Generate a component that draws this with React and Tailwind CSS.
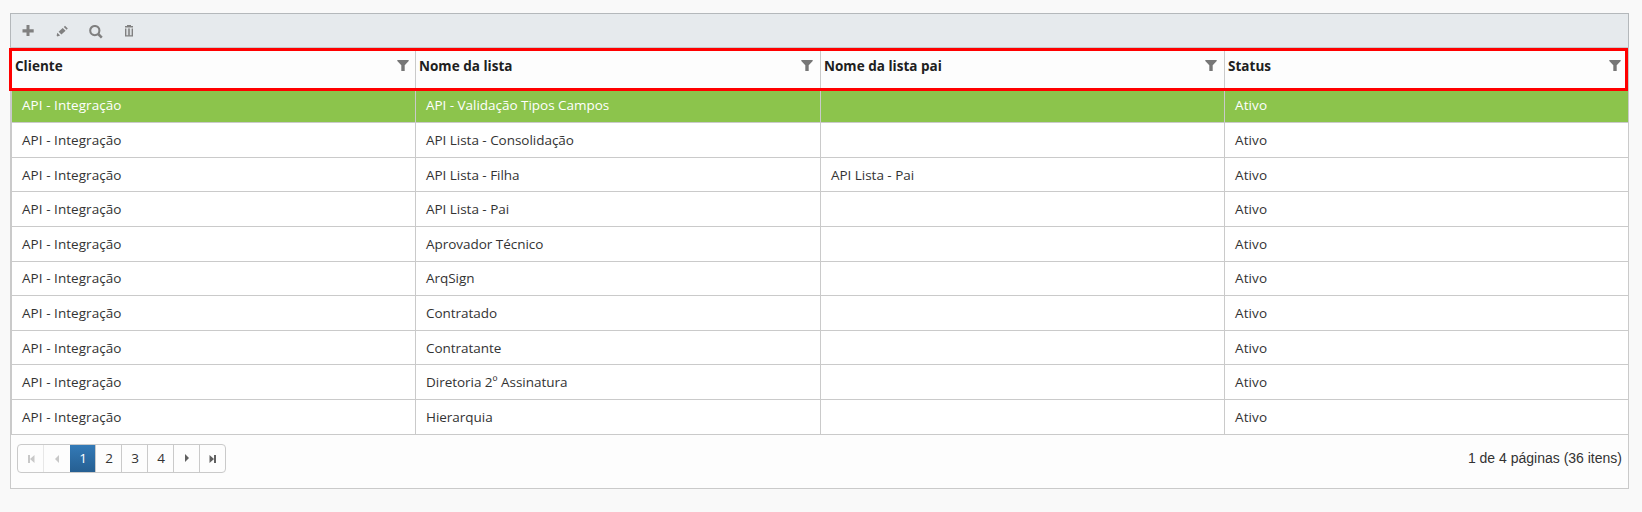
const columns = [
  { title: "Cliente", width: "w-[404px]", tracking: "tracking-[0.05px]" },
  { title: "Nome da lista", width: "w-[405px]", tracking: "tracking-[-0.03px]" },
  { title: "Nome da lista pai", width: "w-[404px]", tracking: "tracking-[-0.03px]" },
  { title: "Status", width: "w-[403px]", tracking: "tracking-[0.1px]" },
];

const rows = [
  { h: "h-8", pad: "pb-[3px]", name: "API - Validação Tipos Campos", parent: "", selected: true },
  { h: "h-[35px]", name: "API Lista - Consolidação", parent: "" },
  { h: "h-[34px]", name: "API Lista - Filha", parent: "API Lista - Pai" },
  { h: "h-[35px]", name: "API Lista - Pai", parent: "" },
  { h: "h-[35px]", name: "Aprovador Técnico", parent: "" },
  { h: "h-[34px]", pad: "pb-[2px]", name: "ArqSign", parent: "" },
  { h: "h-[35px]", name: "Contratado", parent: "" },
  { h: "h-[34px]", name: "Contratante", parent: "" },
  { h: "h-[35px]", name: "Diretoria 2º Assinatura", parent: "" },
  { h: "h-[35px]", name: "Hierarquia", parent: "" },
];

function Toolbar() {
  return (
    <div className="flex h-[35px] items-start border border-[#b4b8bb] border-b-[#c6c9cb] bg-[#e6eaed] pl-[11px] pt-[11px] text-[#808080]">
      <svg className="h-3 w-3" viewBox="0 0 12 12" fill="currentColor">
        <path d="M4.5 0h3v4.2h4.2v3.2H7.5V11h-3V7.4H.5V4.2h4z" />
      </svg>
      <svg className="ml-[22px] h-3 w-3" viewBox="0 0 12 12" fill="currentColor">
        <path d="M9 .8 11.8 3.6l-1.2 1.2L7.8 2zM6.7 2.9l2.9 2.9-4.2 3.8-2.8-2.8zM1.4 7.8l2.7 2.7-2.7.9-.8-.8z" />
      </svg>
      <svg className="ml-[21px] h-[14px] w-[14px]" viewBox="0 0 14 14" fill="none" stroke="currentColor">
        <circle cx="5.8" cy="5.6" r="4.6" strokeWidth="2.1" />
        <path d="m9.2 9 3.6 3.6" strokeWidth="2.5" />
      </svg>
      <svg className="ml-[21px] h-3 w-[10px]" viewBox="0 0 10 12" fill="currentColor">
        <path d="M3 0h4v1h2v1.5H1V1h2zM1 3.6h1.4v6.6H4V3.6h.5v6.6h1V3.6H6v6.6h1.6V3.6H9v7.8H1z" />
        <path d="M3.9 3.6h.7v6.8h-.7zM5.4 3.6h.7v6.8h-.7z" />
      </svg>
    </div>
  );
}

function FilterIcon() {
  return (
    <svg className="h-[11px] w-[12px]" viewBox="0 0 12 11" fill="#777777">
      <path d="M.3 0h11.4v1L7.7 5.3V11H4.3V5.3L.3 1z" />
    </svg>
  );
}

function HeaderRow() {
  return (
    <div className="relative flex h-[43px] bg-[#fdfdfd]">
      {columns.map((c, i) => (
        <div
          key={c.title}
          className={`flex items-start justify-between pt-3 pl-[3px] ${c.width} ${i < 3 ? "border-r border-[#cacaca]" : ""} ${i === 0 ? "pr-[6px]" : "pr-[7px]"}`}
        >
          <span className="-mt-[4px] text-[13.5px] leading-5 font-bold tracking-[0.02px] text-[#202020]">{c.title}</span>
          <FilterIcon />
        </div>
      ))}
      <div className="absolute inset-y-0 -left-[3px] right-0 border-3 border-[#ff0000]" />
    </div>
  );
}

function BodyRow({ row }) {
  const values = ["API - Integração", row.name, row.parent, "Ativo"];
  return (
    <div className={`flex border-b border-[#cacaca] ${row.h} ${row.selected ? "bg-[#8cc44c] text-white" : "bg-white text-[#333333]"}`}>
      {values.map((v, i) => (
        <div
          key={i}
          className={`flex items-center pl-[10px] text-[13.5px] leading-5 ${columns[i].tracking} ${row.pad || ""} ${columns[i].width} ${i < 3 ? "border-r border-[#cacaca]" : ""}`}
        >
          {v}
        </div>
      ))}
    </div>
  );
}

function Arrow({ back, end }) {
  return (
    <svg className={`h-[8px] w-[8px] ${back ? "-scale-x-100" : ""}`} viewBox="0 0 8 8" fill={back ? "#c8c8c8" : "#606060"}>
      {end ? <path d="M.5 0 5 4 .5 8zM5 0h2v8H5z" /> : <path d="M2 0 6 4 2 8z" />}
    </svg>
  );
}

function Pager() {
  const cell = "flex w-[26px] items-center justify-center border-r border-[#cacaca] pb-px pl-px";
  return (
    <div className="flex h-[29px] w-[209px] overflow-hidden rounded-[4px] border border-[#cacaca] text-[13.5px] text-[#333333]">
      <div className="flex w-[26px] items-center justify-center border-r border-[#e7e7e7]"><Arrow back end /></div>
      <div className="flex w-[26px] items-center justify-center"><Arrow back /></div>
      <div className="flex w-[26px] items-center justify-center border-r border-[#cacaca] bg-linear-to-b from-[#337ab7] to-[#265f92] pb-px pl-px text-white">1</div>
      <div className={cell}>2</div>
      <div className={cell}>3</div>
      <div className={cell}>4</div>
      <div className={cell}><Arrow /></div>
      <div className="flex flex-1 items-center justify-center"><Arrow end /></div>
    </div>
  );
}

export default function App() {
  return (
    <div className="h-[512px] w-[1642px] overflow-hidden bg-[#f9f9f9] pl-[10px] pt-[13px] font-['Open_Sans',sans-serif]">
      <div className="w-[1619px]">
        <Toolbar />
        <div className="h-[441px] border border-t-0 border-[#cacaca] bg-[#fdfdfd]">
          <div className="border-l border-[#cacaca]">
            <HeaderRow />
            {rows.map((r) => (
              <BodyRow key={r.name} row={r} />
            ))}
          </div>
          <div className="flex items-center justify-between pl-[6px] pr-[6px] pt-[9px]">
            <Pager />
            <span className="pb-[2px] font-['Liberation_Sans',sans-serif] text-sm text-[#333333]">1 de 4 páginas (36 itens)</span>
          </div>
        </div>
      </div>
    </div>
  );
}
